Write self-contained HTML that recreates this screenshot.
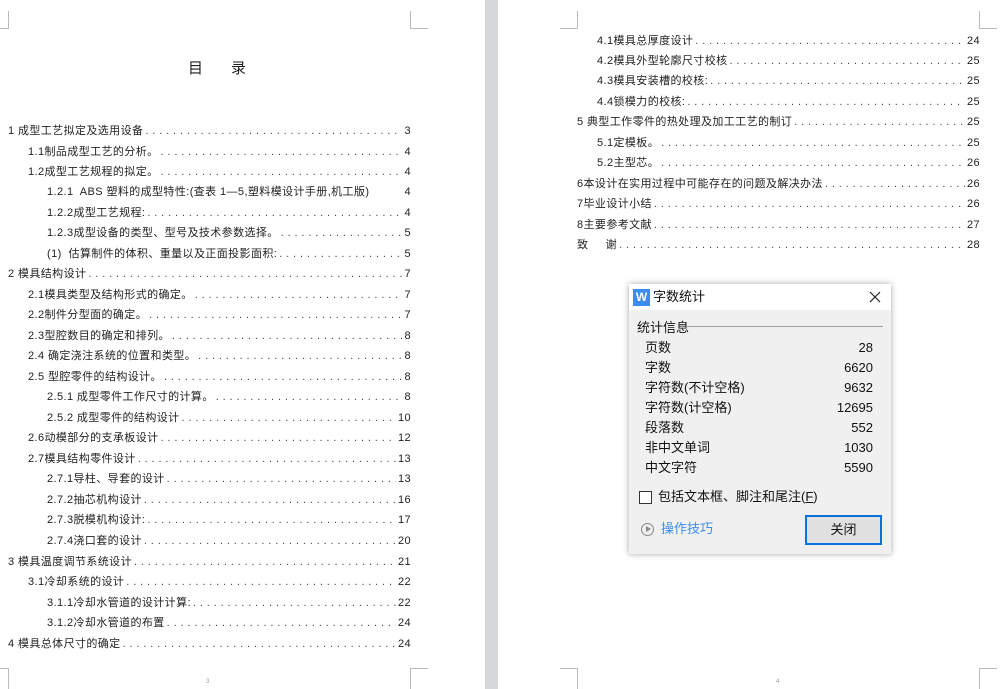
<!DOCTYPE html>
<html><head><meta charset="utf-8"><style>
*{margin:0;padding:0;box-sizing:border-box}
body{width:1000px;height:689px;overflow:hidden;background:#fff;font-family:"Liberation Sans","Noto Sans CJK SC",sans-serif;color:#222;position:relative}
.gap{position:absolute;left:485px;top:0;width:13px;height:689px;background:#d6d7d9}
.c{position:absolute;border-color:#bbb;border-style:solid;border-width:0}
.r{position:absolute;display:flex;align-items:baseline;font-size:11px;height:14px;line-height:14px;white-space:nowrap;letter-spacing:0.4px}
.r .d{flex:1;overflow:hidden;margin:0 2px;color:#444}
.r .d::before{content:". . . . . . . . . . . . . . . . . . . . . . . . . . . . . . . . . . . . . . . . . . . . . . . . . . . . . . . . . . . . . . . . . . . . . . . . . . . . . . . . . . . . . . . . . . . . . . . ."}
.title{position:absolute;left:188px;top:57px;font-size:15px;letter-spacing:28px}
.dlg{position:absolute;left:629px;top:284px;width:262px;height:270px;background:#f0f0f0;box-shadow:0 0 6px rgba(0,0,0,.35);font-size:13px;color:#111}
.tb{height:26px;background:#fff;position:relative}
.ab{position:absolute;font-size:13px;line-height:18px;height:18px;white-space:nowrap}
</style></head><body>
<div class="gap"></div>
<div class="c" style="left:0;top:11px;width:9px;height:18px;border-right-width:1px;border-bottom-width:1px"></div>
<div class="c" style="left:410px;top:11px;width:18px;height:18px;border-left-width:1px;border-bottom-width:1px"></div>
<div class="c" style="left:0;top:668px;width:9px;height:21px;border-right-width:1px;border-top-width:1px"></div>
<div class="c" style="left:410px;top:668px;width:18px;height:21px;border-left-width:1px;border-top-width:1px"></div>
<div class="c" style="left:560px;top:11px;width:18px;height:18px;border-right-width:1px;border-bottom-width:1px"></div>
<div class="c" style="left:979px;top:11px;width:18px;height:18px;border-left-width:1px;border-bottom-width:1px"></div>
<div class="c" style="left:560px;top:668px;width:18px;height:21px;border-right-width:1px;border-top-width:1px"></div>
<div class="c" style="left:979px;top:668px;width:18px;height:21px;border-left-width:1px;border-top-width:1px"></div>
<div style="position:absolute;left:206px;top:679px;font-size:6px;color:#999">3</div>
<div style="position:absolute;left:776px;top:679px;font-size:6px;color:#999">4</div>
<div class="title">目录</div>

<div class="r" style="left:8px;width:403px;top:124px"><span>1 成型工艺拟定及选用设备</span><span class="d"></span><span>3</span></div>
<div class="r" style="left:28px;width:383px;top:145px"><span>1.1制品成型工艺的分析。</span><span class="d"></span><span>4</span></div>
<div class="r" style="left:28px;width:383px;top:165px"><span>1.2成型工艺规程的拟定。</span><span class="d"></span><span>4</span></div>
<div class="r" style="left:47px;width:364px;top:185px"><span>1.2.1&nbsp; ABS 塑料的成型特性:(查表 1—5,塑料模设计手册,机工版)</span><span style="flex:1"></span><span>4</span></div>
<div class="r" style="left:47px;width:364px;top:206px"><span>1.2.2成型工艺规程:</span><span class="d"></span><span>4</span></div>
<div class="r" style="left:47px;width:364px;top:226px"><span>1.2.3成型设备的类型、型号及技术参数选择。</span><span class="d"></span><span>5</span></div>
<div class="r" style="left:47px;width:364px;top:247px"><span>(1)&nbsp; 估算制件的体积、重量以及正面投影面积:</span><span class="d"></span><span>5</span></div>
<div class="r" style="left:8px;width:403px;top:267px"><span>2 模具结构设计</span><span class="d"></span><span>7</span></div>
<div class="r" style="left:28px;width:383px;top:288px"><span>2.1模具类型及结构形式的确定。</span><span class="d"></span><span>7</span></div>
<div class="r" style="left:28px;width:383px;top:308px"><span>2.2制件分型面的确定。</span><span class="d"></span><span>7</span></div>
<div class="r" style="left:28px;width:383px;top:329px"><span>2.3型腔数目的确定和排列。</span><span class="d"></span><span>8</span></div>
<div class="r" style="left:28px;width:383px;top:349px"><span>2.4 确定浇注系统的位置和类型。</span><span class="d"></span><span>8</span></div>
<div class="r" style="left:28px;width:383px;top:370px"><span>2.5 型腔零件的结构设计。</span><span class="d"></span><span>8</span></div>
<div class="r" style="left:47px;width:364px;top:390px"><span>2.5.1 成型零件工作尺寸的计算。</span><span class="d"></span><span>8</span></div>
<div class="r" style="left:47px;width:364px;top:411px"><span>2.5.2 成型零件的结构设计</span><span class="d"></span><span>10</span></div>
<div class="r" style="left:28px;width:383px;top:431px"><span>2.6动模部分的支承板设计</span><span class="d"></span><span>12</span></div>
<div class="r" style="left:28px;width:383px;top:452px"><span>2.7模具结构零件设计</span><span class="d"></span><span>13</span></div>
<div class="r" style="left:47px;width:364px;top:472px"><span>2.7.1导柱、导套的设计</span><span class="d"></span><span>13</span></div>
<div class="r" style="left:47px;width:364px;top:493px"><span>2.7.2抽芯机构设计</span><span class="d"></span><span>16</span></div>
<div class="r" style="left:47px;width:364px;top:513px"><span>2.7.3脱模机构设计:</span><span class="d"></span><span>17</span></div>
<div class="r" style="left:47px;width:364px;top:534px"><span>2.7.4浇口套的设计</span><span class="d"></span><span>20</span></div>
<div class="r" style="left:8px;width:403px;top:555px"><span>3 模具温度调节系统设计</span><span class="d"></span><span>21</span></div>
<div class="r" style="left:28px;width:383px;top:575px"><span>3.1冷却系统的设计</span><span class="d"></span><span>22</span></div>
<div class="r" style="left:47px;width:364px;top:596px"><span>3.1.1冷却水管道的设计计算:</span><span class="d"></span><span>22</span></div>
<div class="r" style="left:47px;width:364px;top:616px"><span>3.1.2冷却水管道的布置</span><span class="d"></span><span>24</span></div>
<div class="r" style="left:8px;width:403px;top:637px"><span>4 模具总体尺寸的确定</span><span class="d"></span><span>24</span></div>

<div class="r" style="left:597px;width:383px;top:34px"><span>4.1模具总厚度设计</span><span class="d"></span><span>24</span></div>
<div class="r" style="left:597px;width:383px;top:54px"><span>4.2模具外型轮廓尺寸校核</span><span class="d"></span><span>25</span></div>
<div class="r" style="left:597px;width:383px;top:74px"><span>4.3模具安装槽的校核:</span><span class="d"></span><span>25</span></div>
<div class="r" style="left:597px;width:383px;top:95px"><span>4.4锁模力的校核:</span><span class="d"></span><span>25</span></div>
<div class="r" style="left:577px;width:403px;top:115px"><span>5 典型工作零件的热处理及加工工艺的制订</span><span class="d"></span><span>25</span></div>
<div class="r" style="left:597px;width:383px;top:136px"><span>5.1定模板。</span><span class="d"></span><span>25</span></div>
<div class="r" style="left:597px;width:383px;top:156px"><span>5.2主型芯。</span><span class="d"></span><span>26</span></div>
<div class="r" style="left:577px;width:403px;top:177px"><span>6本设计在实用过程中可能存在的问题及解决办法</span><span class="d"></span><span>26</span></div>
<div class="r" style="left:577px;width:403px;top:197px"><span>7毕业设计小结</span><span class="d"></span><span>26</span></div>
<div class="r" style="left:577px;width:403px;top:218px"><span>8主要参考文献</span><span class="d"></span><span>27</span></div>
<div class="r" style="left:577px;width:403px;top:238px"><span>致&nbsp;&nbsp;&nbsp;&nbsp; 谢</span><span class="d"></span><span>28</span></div>

<div class="dlg">
 <div class="tb">
  <div style="position:absolute;left:4px;top:5px;width:17px;height:17px;background:#3d8cf0;color:#fff;font-size:12px;line-height:17px;text-align:center;font-weight:bold">W</div>
  <div class="ab" style="left:24px;top:4px">字数统计</div>
  <svg style="position:absolute;left:240px;top:7px" width="12" height="12"><path d="M1 1L11 11M11 1L1 11" stroke="#222" stroke-width="1.2"/></svg>
 </div>
 <div class="ab" style="left:8px;top:35px">统计信息</div>
 <div style="position:absolute;left:58px;top:42px;width:196px;height:1px;background:#a0a0a0"></div>
 <div class="ab" style="left:16px;top:55px">页数</div><div class="ab" style="right:18px;top:55px">28</div>
 <div class="ab" style="left:16px;top:75px">字数</div><div class="ab" style="right:18px;top:75px">6620</div>
 <div class="ab" style="left:16px;top:95px">字符数(不计空格)</div><div class="ab" style="right:18px;top:95px">9632</div>
 <div class="ab" style="left:16px;top:115px">字符数(计空格)</div><div class="ab" style="right:18px;top:115px">12695</div>
 <div class="ab" style="left:16px;top:135px">段落数</div><div class="ab" style="right:18px;top:135px">552</div>
 <div class="ab" style="left:16px;top:155px">非中文单词</div><div class="ab" style="right:18px;top:155px">1030</div>
 <div class="ab" style="left:16px;top:175px">中文字符</div><div class="ab" style="right:18px;top:175px">5590</div>
 <div style="position:absolute;left:10px;top:207px;width:13px;height:13px;border:1px solid #333;background:#fff"></div>
 <div class="ab" style="left:29px;top:204px">包括文本框、脚注和尾注(<u>F</u>)</div>
 <div style="position:absolute;left:12px;top:239px;width:13px;height:13px;border:1px solid #888;border-radius:50%"></div>
 <div style="position:absolute;left:17px;top:242px;width:0;height:0;border-left:5px solid #888;border-top:3.5px solid transparent;border-bottom:3.5px solid transparent"></div>
 <div class="ab" style="left:32px;top:236px;color:#3d8cf0">操作技巧</div>
 <div style="position:absolute;left:176px;top:231px;width:77px;height:30px;border:2px solid #0a74d8;background:#e1e1e1;text-align:center;line-height:26px">关闭</div>
</div>
</body></html>
